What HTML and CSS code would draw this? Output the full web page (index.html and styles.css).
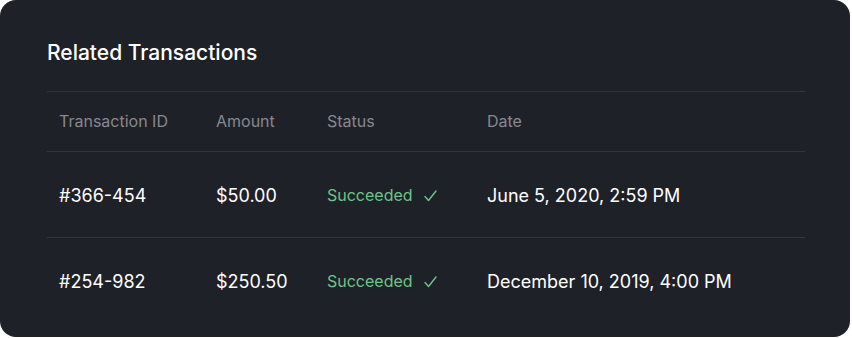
FILE: index.html
```html
<!DOCTYPE html>
<html lang="en">
<head>
<meta charset="utf-8">
<title>Related Transactions</title>
<link rel="stylesheet" href="styles.css">
</head>
<body>
<section class="card">
  <h2 class="title">Related Transactions</h2>
  <table class="tx">
    <thead>
      <tr>
        <th class="c-id">Transaction ID</th>
        <th class="c-amt">Amount</th>
        <th class="c-status">Status</th>
        <th class="c-date">Date</th>
      </tr>
    </thead>
    <tbody>
      <tr>
        <td>#366-454</td>
        <td>$50.00</td>
        <td class="status-cell"><span class="status">Succeeded<svg class="check" width="13" height="12" viewBox="0 0 13 12"><polyline points="1,6.5 4.5,10.5 12,1" fill="none" stroke="currentColor" stroke-width="1.4" stroke-linecap="round" stroke-linejoin="round"/></svg></span></td>
        <td>June 5, 2020, 2:59 PM</td>
      </tr>
      <tr>
        <td>#254-982</td>
        <td>$250.50</td>
        <td class="status-cell"><span class="status">Succeeded<svg class="check" width="13" height="12" viewBox="0 0 13 12"><polyline points="1,6.5 4.5,10.5 12,1" fill="none" stroke="currentColor" stroke-width="1.4" stroke-linecap="round" stroke-linejoin="round"/></svg></span></td>
        <td>December 10, 2019, 4:00 PM</td>
      </tr>
    </tbody>
  </table>
</section>
</body>
</html>
```

FILE: styles.css
```css
html, body {
  margin: 0;
  padding: 0;
  background: #ffffff;
}

body {
  font-family: Inter, "Noto Sans", sans-serif;
}

.card {
  box-sizing: border-box;
  width: 850px;
  height: 337px;
  background: #1f2128;
  border-radius: 16px;
  padding: 39px 47px 0 47px;
}

.title {
  margin: 0;
  font-size: 21px;
  line-height: 27px;
  font-weight: 500;
  color: #ffffff;
}

.tx {
  margin-top: 25px;
  width: 758px;
  border-collapse: collapse;
  table-layout: fixed;
  border-top: 1px solid #33353c;
}

.tx th {
  text-align: left;
  font-weight: 400;
  font-size: 16px;
  color: #878891;
  height: 58px;
  padding: 0 0 1px 12px;
  border-bottom: 1px solid #33353c;
}

.tx td {
  height: 83px;
  padding: 2px 0 0 12px;
  font-size: 18px;
  color: #ffffff;
  font-weight: 400;
}

.tx td.status-cell {
  height: 85px;
  padding: 0 0 0 12px;
}

.tx tbody tr:first-child td {
  border-bottom: 1px solid #33353c;
}

.c-id { width: 145px; }
.c-amt { width: 99px; }
.c-status { width: 148px; }

.status {
  display: inline-flex;
  align-items: center;
  font-size: 16px;
  color: #6cc586;
}

.check {
  margin-left: 11px;
  margin-top: 1px;
}
```
